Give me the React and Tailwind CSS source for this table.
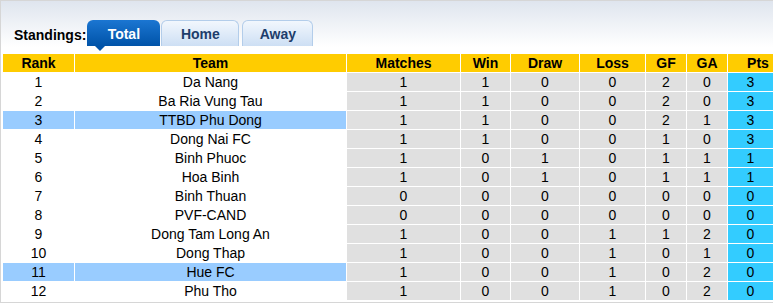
import React from "react";

const ROWS = [
  [1, "Da Nang", 1, 1, 0, 0, 2, 0, 3],
  [2, "Ba Ria Vung Tau", 1, 1, 0, 0, 2, 0, 3],
  [3, "TTBD Phu Dong", 1, 1, 0, 0, 2, 1, 3, true],
  [4, "Dong Nai FC", 1, 1, 0, 0, 1, 0, 3],
  [5, "Binh Phuoc", 1, 0, 1, 0, 1, 1, 1],
  [6, "Hoa Binh", 1, 0, 1, 0, 1, 1, 1],
  [7, "Binh Thuan", 0, 0, 0, 0, 0, 0, 0],
  [8, "PVF-CAND", 0, 0, 0, 0, 0, 0, 0],
  [9, "Dong Tam Long An", 1, 0, 0, 1, 1, 2, 0],
  [10, "Dong Thap", 1, 0, 0, 1, 0, 1, 0],
  [11, "Hue FC", 1, 0, 0, 1, 0, 2, 0, true],
  [12, "Phu Tho", 1, 0, 0, 1, 0, 2, 0],
];

const HEADERS = ["Rank", "Team", "Matches", "Win", "Draw", "Loss", "GF", "GA", "Pts"];

export default function App() {
  return (
    <div className="w-[773px] h-[303px] overflow-hidden border-t border-l border-b border-[#d6d6d6] bg-[linear-gradient(to_bottom,#dfe5ee_0px,#ffffff_46px)] font-['Liberation_Sans',Arial,sans-serif] text-[14px] text-black">
      {/* Tabs */}
      <div className="flex items-end h-[26px] mt-[19px] pl-[13px]">
        <span className="font-bold text-[14px] leading-none mb-[4px] mr-[1px]">Standings:</span>
        <div className="relative w-[73px] h-[26px] pt-[2px] rounded-t-[6px] bg-[linear-gradient(to_bottom,#1b76d2,#0053a8)] flex items-center justify-center text-white font-bold">
          Total
          <span className="absolute left-[8px] top-[26px] w-0 h-0 border-l-[5px] border-r-[5px] border-t-[5px] border-l-transparent border-r-transparent border-t-[#0053a8]" />
        </div>
        <div className="ml-[1px] w-[78px] h-[26px] pt-[2px] rounded-t-[6px] border border-b-0 border-[#b3cdea] bg-[linear-gradient(to_bottom,#f2f7fd,#cddff4)] flex items-center justify-center text-[#1d3d6b] font-bold">
          Home
        </div>
        <div className="ml-[3px] w-[71px] h-[26px] pt-[2px] rounded-t-[6px] border border-b-0 border-[#b3cdea] bg-[linear-gradient(to_bottom,#f2f7fd,#cddff4)] flex items-center justify-center text-[#1d3d6b] font-bold">
          Away
        </div>
      </div>

      {/* Table */}
      <div className="mt-[7px] ml-[1px] p-[1px] bg-white grid grid-cols-[71px_271px_113px_49px_68px_65px_40px_40px_60px] gap-[1px] auto-rows-[18px]">
        {HEADERS.map((h) => (
          <div key={h} className="bg-[#ffcc00] font-bold flex items-center justify-center leading-none">
            {h}
          </div>
        ))}
        {ROWS.map((r) => {
          const hl = r[9];
          return (
            <React.Fragment key={r[0]}>
              <div className={`${hl ? "bg-[#99ccff]" : "bg-white"} flex items-center justify-center leading-none`}>{r[0]}</div>
              <div className={`${hl ? "bg-[#99ccff]" : "bg-white"} flex items-center justify-center leading-none`}>{r[1]}</div>
              {r.slice(2, 8).map((v, i) => (
                <div key={i} className="bg-[#e0e0e0] flex items-center justify-center leading-none">{v}</div>
              ))}
              <div className="bg-[#33ccff] flex items-center justify-center leading-none pr-[15px]">{r[8]}</div>
            </React.Fragment>
          );
        })}
      </div>
    </div>
  );
}
